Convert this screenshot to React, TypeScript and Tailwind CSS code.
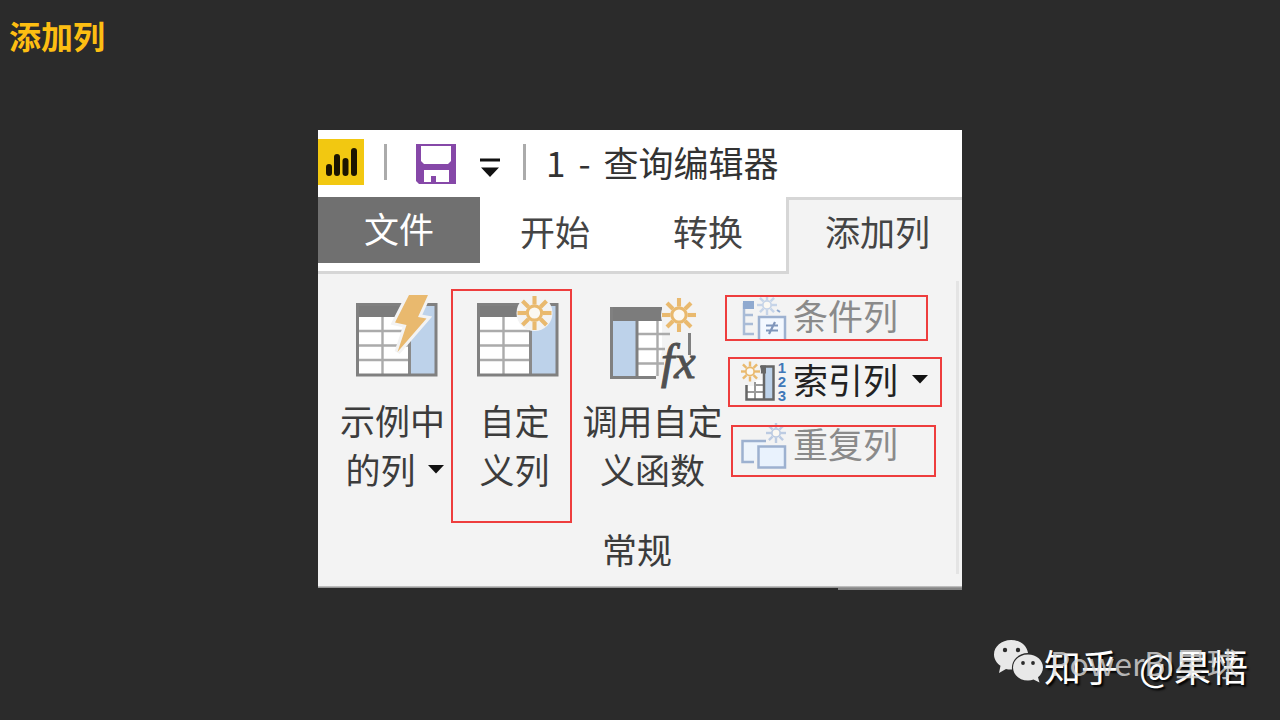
import type { ReactNode } from "react";

const RAYS = [0, 45, 90, 135, 180, 225, 270, 315];

function Spark({ cx, cy, r, color, halo }: { cx: number; cy: number; r: number; color: string; halo?: boolean }) {
  return (
    <g>
      {halo && <circle cx={cx} cy={cy} r={r + 1} fill="#f3f3f3" />}
      {RAYS.map((a) => (
        <line
          key={a}
          x1={cx}
          y1={cy - r * 0.5}
          x2={cx}
          y2={cy - r}
          stroke={color}
          strokeWidth={r * 0.24}
          transform={`rotate(${a} ${cx} ${cy})`}
        />
      ))}
      <circle cx={cx} cy={cy} r={r * 0.42} fill="#fbf8f2" stroke={color} strokeWidth={r * 0.18} />
    </g>
  );
}

function TableBase({ x }: { x: number }) {
  return (
    <g transform={`translate(${x} 0)`}>
      <rect x="1.5" y="13.5" width="78" height="70.5" fill="#fff" />
      <rect x="54" y="13.5" width="25" height="70.5" fill="#bdd2ea" />
      <rect x="0" y="12" width="44" height="14" fill="#7c7c7c" />
      <path d="M2 40H54M2 54.500H54M2 69H54M26.500 26V84" stroke="#ababab" strokeWidth="2.400" fill="none" />
      <path d="M53.500 26V84" stroke="#8a8a8a" strokeWidth="3" />
      <rect x="1.500" y="13.500" width="78.500" height="70.500" fill="none" stroke="#808080" strokeWidth="3" />
    </g>
  );
}

function ExampleIcon() {
  return (
    <svg viewBox="0 0 96 96" className="size-24" aria-hidden="true">
      <TableBase x={11} />
      <path
        d="M64 4H83L73 26L81.500 27.500L52.500 61L61.500 34L50 31.500Z"
        fill="#e9b96e"
        stroke="#f3f3f3"
        strokeWidth="6"
        paintOrder="stroke"
      />
    </svg>
  );
}

function CustomIcon() {
  return (
    <svg viewBox="0 0 96 96" className="size-24" aria-hidden="true">
      <TableBase x={10} />
      <Spark cx={67.500} cy={22} r={17} color="#e9b96e" halo />
    </svg>
  );
}

function FunctionIcon() {
  return (
    <svg viewBox="0 0 96 96" className="size-24 overflow-visible" aria-hidden="true">
      <path d="M33 29H57V60L50 86H33Z" fill="#fff" />
      <rect x="5" y="16" width="52" height="14" fill="#7c7c7c" />
      <rect x="6" y="30" width="25" height="56" fill="#bdd2ea" />
      <path d="M33 43H65M33 58H60M33 72.500H59M52.500 30V85" stroke="#ababab" strokeWidth="2.400" fill="none" />
      <path d="M32 30V86" stroke="#808080" strokeWidth="3" />
      <path d="M6.500 16V86.500H51" stroke="#808080" strokeWidth="3" fill="none" />
      <Spark cx={74} cy={24} r={17} color="#e9b96e" halo />
      <path d="M84.500 42V64" stroke="#808080" strokeWidth="3" />
      <text x="56" y="87" className="font-['Liberation_Serif'] text-[48px] italic" fill="#505050" stroke="#505050">
        fx
      </text>
    </svg>
  );
}

function ConditionIcon() {
  return (
    <svg viewBox="0 0 48 48" className="size-12 shrink-0" aria-hidden="true">
      <path d="M3 10V41H13M3 22H12M3 31H12" stroke="#a9bbd6" strokeWidth="2.500" fill="none" />
      <rect x="2" y="8" width="11" height="8" fill="#8fa9cf" />
      <Spark cx={26} cy={12} r={10} color="#c6d4e8" />
      <path d="M36 17L39 19" stroke="#8fa9cf" strokeWidth="2" />
      <rect x="18" y="24" width="26" height="24" fill="#f3f8ff" stroke="#9db1d0" strokeWidth="2.500" />
      <path d="M25 32.500H37M25 37.500H37M34 29L28 41" stroke="#7f95bb" strokeWidth="2.200" fill="none" />
    </svg>
  );
}

function IndexIcon() {
  return (
    <svg viewBox="0 0 48 48" className="size-12 shrink-0" aria-hidden="true">
      <path d="M6 29H14V23H24V42H6Z" fill="#fff" />
      <rect x="24" y="10" width="8" height="32" fill="#bdd2ea" />
      <path d="M6 35H24M14 25V42M14 28H24" stroke="#9a9a9a" strokeWidth="2" fill="none" />
      <path d="M5.500 28V42.500H32.500V9.500H20M23 12V42" stroke="#666" strokeWidth="2.500" fill="none" />
      <rect x="19" y="8.500" width="6" height="8" fill="#666" />
      <Spark cx={9} cy={14.500} r={10} color="#e9b96e" halo />
      <g className="font-['Liberation_Sans'] text-[15px] font-bold" fill="#3f78b8" textAnchor="middle">
        <text x="41" y="16">1</text>
        <text x="41" y="30">2</text>
        <text x="41" y="44">3</text>
      </g>
    </svg>
  );
}

function DuplicateIcon() {
  return (
    <svg viewBox="0 0 48 48" className="size-12 shrink-0" aria-hidden="true">
      <path d="M25 20H1.500V41H13" stroke="#9db1d0" strokeWidth="2.500" fill="#edf4fc" />
      <rect x="17.500" y="25.500" width="26.500" height="21" fill="#e9f2fd" stroke="#9db1d0" strokeWidth="2.500" />
      <Spark cx={35} cy={12} r={10} color="#bccbe2" />
    </svg>
  );
}

function Caret() {
  return (
    <svg viewBox="0 0 16 10" className="h-2.5 w-4 shrink-0" aria-hidden="true">
      <path d="M0 1H16L8 9.500Z" fill="#111" />
    </svg>
  );
}

function BigButton({ icon, children, className }: { icon: ReactNode; children: ReactNode; className: string }) {
  return (
    <button type="button" className={`flex flex-col items-center border-2 pb-7 ${className}`}>
      {icon}
      <span className="mt-2 flex flex-col items-center leading-[49px] whitespace-nowrap">{children}</span>
    </button>
  );
}

function SmallButton({ icon, label, caret, frame, className }: { icon: ReactNode; label: string; caret?: boolean; frame: string; className: string }) {
  return (
    <button type="button" className={`relative flex h-16 items-center gap-1 pl-4 whitespace-nowrap ${className}`}>
      {icon}
      <span className="pb-1">{label}</span>
      {caret && (
        <span className="pb-1 pl-2.5">
          <Caret />
        </span>
      )}
      <span className={`pointer-events-none absolute border-2 border-[#ee3d3d] ${frame}`} />
    </button>
  );
}

function TitleBar() {
  return (
    <header className="flex h-[67px] items-center bg-white pb-1 text-[#333]">
      <svg viewBox="0 0 46 46" className="size-[46px]" aria-hidden="true">
        <rect width="46" height="46" fill="#f2c811" />
        <path d="M11 28V34M19 18V34M27.500 22V34M36 12V34" stroke="#1c1500" strokeWidth="6" strokeLinecap="round" />
      </svg>
      <span className="ml-5 h-9 w-[3px] bg-[#ababab]" />
      <button type="button" aria-label="保存" className="ml-7 pt-1">
        <svg viewBox="0 0 42 42" className="size-[42px]" aria-hidden="true">
          <path d="M1 1H41V41H4L1 38Z" fill="#8648a8" />
          <path d="M6 3H36V18L33 21H9L6 18Z" fill="#fff" />
          <path d="M9 27H34V39H21V33H16V39H9Z" fill="#fff" />
        </svg>
      </button>
      <button type="button" aria-label="自定义快速访问工具栏" className="ml-[22px] pt-3">
        <svg viewBox="0 0 22 20" className="h-5 w-[22px]" aria-hidden="true">
          <path d="M1 2H21" stroke="#111" strokeWidth="3" />
          <path d="M2 9.500H20L11 19Z" fill="#111" />
        </svg>
      </button>
      <span className="ml-[22px] h-9 w-[3px] bg-[#ababab]" />
      <span className="ml-5 flex gap-[13px] whitespace-nowrap">
        <span>1</span>
        <span>-</span>
        <span>查询编辑器</span>
      </span>
    </header>
  );
}

function Tabs() {
  return (
    <nav className="flex h-[77px] bg-white text-[#444]">
      <div className="flex border-b-[3px] border-[#d6d6d6]">
        <button type="button" className="h-[66px] w-[162px] bg-[#707070] pb-1 text-white">文件</button>
        <button type="button" className="w-[150px] pb-1.5">开始</button>
        <button type="button" className="w-[156px] pb-1.5">转换</button>
      </div>
      <button type="button" className="flex-1 border-t-[3px] border-l-[3px] border-[#d6d6d6] bg-[#f3f3f3] pb-3 pl-1 whitespace-nowrap">
        添加列
      </button>
    </nav>
  );
}

function Ribbon() {
  return (
    <section className="flex bg-[#f3f3f3] pt-[7px] pr-[3px] text-[#3c3c3c]">
      <div className="flex flex-1 flex-col pb-3">
        <div className="flex items-start pt-1 pl-4">
          <div className="flex items-start pt-1">
            <BigButton icon={<ExampleIcon />} className="w-[117px] border-transparent">
              <span>示例中</span>
              <span className="flex items-center gap-3 pl-1">
                的列
                <Caret />
              </span>
            </BigButton>
            <BigButton icon={<CustomIcon />} className="w-[121px] border-[#ee3d3d] pl-1.5">
              <span>自定</span>
              <span>义列</span>
            </BigButton>
            <BigButton icon={<FunctionIcon />} className="w-[153px] border-transparent pl-2">
              <span>调用自定</span>
              <span>义函数</span>
            </BigButton>
          </div>
          <div className="flex flex-1 flex-col">
            <SmallButton icon={<ConditionIcon />} label="条件列" className="text-[#8a8a8a]" frame="top-2.5 left-0 h-[46px] w-[203px]" />
            <SmallButton icon={<IndexIcon />} label="索引列" caret className="text-[#222]" frame="top-2 left-[3px] h-[50px] w-[214px]" />
            <SmallButton icon={<DuplicateIcon />} label="重复列" className="text-[#8a8a8a]" frame="top-3 left-1.5 h-[52px] w-[205px]" />
          </div>
        </div>
        <p className="pt-px text-center">常规</p>
      </div>
      <div className="mb-3 w-[3px] bg-[#e4e4e4]" />
    </section>
  );
}

function WeChatLogo() {
  return (
    <svg viewBox="0 0 50 48" className="h-12 w-[50px] shrink-0" aria-hidden="true">
      <path d="M17 2C7.500 2 0 8.500 0 16.500C0 21 2.500 25 6.500 27.800L5 35L12 31C14 31.500 16 31.700 18 31.500C17 22 25 15 34 15C33 7.500 26 2 17 2Z" fill="#e8e8e8" />
      <path d="M34 16.500C25.500 16.500 19 22.300 19 29.500C19 36.800 25.500 42.500 34 42.500C36 42.500 37.800 42.200 39.500 41.600L45.500 44.500L44 39.200C47.200 36.800 49 33.300 49 29.500C49 22.300 42.500 16.500 34 16.500Z" fill="#e8e8e8" />
      <g fill="#2b2b2b">
        <circle cx="11" cy="12" r="2.200" />
        <circle cx="24" cy="12" r="2.200" />
        <circle cx="29" cy="25" r="1.900" />
        <circle cx="39" cy="25" r="1.900" />
      </g>
    </svg>
  );
}

export default function App() {
  return (
    <div className="flex min-h-screen flex-col bg-[#2b2b2b] font-['Noto_Sans_CJK_SC',sans-serif]">
      <h1 className="mt-[15px] pl-[9px] text-[32px] leading-10 font-bold text-[#fdbe12]">添加列</h1>
      <main className="mx-auto mt-[75px] w-full max-w-[644px] text-[35px] leading-[50px]">
        <TitleBar />
        <Tabs />
        <Ribbon />
        <div className="h-0.5 bg-linear-to-b from-[#d0d0d0] to-[#858585]" />
        <div className="ml-auto h-0.5 w-[124px] bg-[#858585]" />
      </main>
      <footer className="mt-12 flex justify-end pr-8 whitespace-nowrap">
        <WeChatLogo />
        <div className="grid h-14 w-[204px] items-center">
          <span className="col-start-1 row-start-1 flex justify-between text-[37px] leading-[56px] text-white [text-shadow:2px_2px_2px_#000]">
            <span>知乎</span>
            <span>@果悟</span>
          </span>
          <span className="col-start-1 row-start-1 pb-2 pl-1.5 text-[32px] leading-[48px] text-[#dcdcdc]/80">PowerBI星球</span>
        </div>
      </footer>
    </div>
  );
}
